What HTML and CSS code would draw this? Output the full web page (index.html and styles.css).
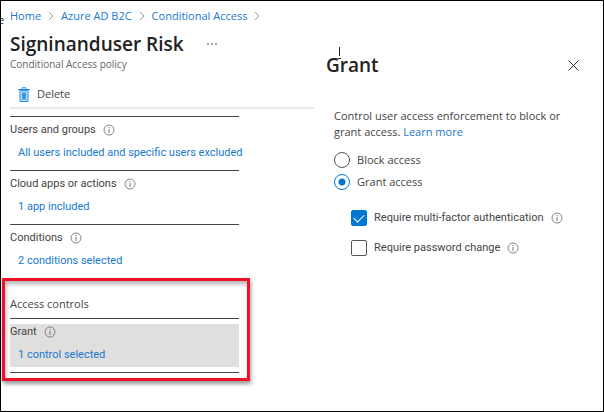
FILE: index.html
```
<!DOCTYPE html>
<html lang="en">
<head>
    <meta charset="UTF-8">
    <meta name="viewport" content="width=device-width, initial-scale=1.0">
    <title>Signinanduser Risk - Conditional Access</title>
    <link rel="stylesheet" href="styles.css">
</head>
<body>
    <svg width="0" height="0" class="sprite">
        <symbol id="info" viewBox="0 0 12 12">
            <circle cx="6" cy="6" r="5" fill="none" stroke="#777" stroke-width="0.9"/>
            <path d="M6 5v4M6 3v1.1" stroke="#777" fill="none"/>
        </symbol>
        <symbol id="chevron" viewBox="0 0 6 10">
            <path d="M1 1l4 4-4 4" stroke="#999" fill="none"/>
        </symbol>
    </svg>
    <span class="behind">e</span>

    <main class="window">
        <section class="policy">
            <nav class="breadcrumb">
                <a href="#">Home</a>
                <svg class="chevron"><use href="#chevron"/></svg>
                <a href="#">Azure AD B2C</a>
                <svg class="chevron"><use href="#chevron"/></svg>
                <a href="#">Conditional Access</a>
                <svg class="chevron"><use href="#chevron"/></svg>
            </nav>

            <div class="title-row">
                <h1>Signinanduser Risk</h1>
                <button class="more" aria-label="More">
                    <svg width="12" height="4" viewBox="0 0 12 4" fill="#333"><circle cx="2" cy="2" r="0.8"/><circle cx="6" cy="2" r="0.8"/><circle cx="10" cy="2" r="0.8"/></svg>
                </button>
            </div>
            <p class="subtitle">Conditional Access policy</p>

            <div class="toolbar">
                <button class="delete">
                    <svg width="12" height="15" viewBox="0 0 12 15">
                        <path d="M1.5 3h9v11a1 1 0 0 1-1 1h-7a1 1 0 0 1-1-1z" fill="#2f8fdf"/>
                        <path d="M2.5 4h7v10h-7z" fill="#b5daf7"/>
                        <path d="M4 5.5h4v7H4z" fill="#3c97e2"/>
                        <path d="M0 2.5h12M4 2V0.8h4V2" stroke="#2f8fdf" fill="none"/>
                    </svg>
                    Delete
                </button>
            </div>

            <div class="settings">
                <div class="item">
                    <div class="item-label">Users and groups <svg class="info"><use href="#info"/></svg></div>
                    <a href="#">All users included and specific users excluded</a>
                </div>
                <div class="item">
                    <div class="item-label">Cloud apps or actions <svg class="info"><use href="#info"/></svg></div>
                    <a href="#">1 app included</a>
                </div>
                <div class="item">
                    <div class="item-label">Conditions <svg class="info"><use href="#info"/></svg></div>
                    <a href="#">2 conditions selected</a>
                </div>
            </div>

            <div class="highlight">
                <h3>Access controls</h3>
                <div class="selected-wrap">
                    <div class="selected">
                        <div class="item-label">Grant <svg class="info"><use href="#info"/></svg></div>
                        <a href="#">1 control selected</a>
                    </div>
                </div>
            </div>
        </section>

        <section class="grant">
            <div class="grant-header">
                <h2>Grant<svg class="caret" width="5" height="12" viewBox="0 0 5 12"><path d="M2.5 0v9M1 11.5h3" stroke="#222" fill="none"/></svg></h2>
                <button class="close" aria-label="Close">
                    <svg width="11" height="11" viewBox="0 0 11 11"><path d="M0.5 0.5l10 10M10.5 0.5l-10 10" stroke="#333" fill="none"/></svg>
                </button>
            </div>

            <div class="grant-body">
                <p>Control user access enforcement to block or grant access. <a href="#">Learn more</a></p>

                <label class="radio"><input type="radio" name="access"> Block access</label>
                <label class="radio"><input type="radio" name="access" checked> Grant access</label>

                <div class="checks">
                    <label><input type="checkbox" checked> Require multi-factor authentication <svg class="info"><use href="#info"/></svg></label>
                    <label><input type="checkbox"> Require password change <svg class="info"><use href="#info"/></svg></label>
                </div>
            </div>
        </section>
    </main>
</body>
</html>
```
FILE: styles.css
```
* {
    box-sizing: border-box;
}

body {
    margin: 0;
    font-family: "Open Sans", "Noto Sans", sans-serif;
    font-size: 11px;
    line-height: 16px;
    color: #444;
    background: white;
}

h1, h2, h3, p {
    margin: 0;
}

a {
    color: #1679d3;
    text-decoration: none;
}

button {
    display: flex;
    align-items: center;
    padding: 0;
    border: none;
    background: none;
    font: inherit;
    color: inherit;
    cursor: pointer;
}

.sprite {
    position: absolute;
}

.behind {
    position: absolute;
    top: 12px;
    left: -2px;
    color: #222;
}

.window {
    display: grid;
    grid-template-columns: 52fr 48fr;
    min-height: 100vh;
    border: 1px solid #000;
}

.info {
    flex: none;
    width: 12px;
    height: 12px;
}

/* left pane */
.policy {
    padding: 7px 0 0 9px;
}

.breadcrumb {
    display: flex;
    align-items: center;
    gap: 7px;
    white-space: nowrap;
}

.chevron {
    width: 6px;
    height: 10px;
}

.title-row {
    display: flex;
    align-items: center;
    gap: 22px;
    margin-top: 8px;
}

h1, h2 {
    font-size: 19px;
    line-height: 24px;
    font-weight: 600;
    color: #222;
    white-space: nowrap;
}

.subtitle {
    font-size: 10px;
    color: #666;
}

.toolbar {
    padding: 14px 8px 5px;
    border-bottom: 2px solid #eaeaea;
}

.delete {
    gap: 7px;
}

.settings, .selected-wrap {
    width: 229px;
}

.settings {
    margin-top: 7px;
}

.item, .selected, .checks {
    font-family: Roboto, "Open Sans", sans-serif;
}

.item {
    padding: 5px 0 9px;
    border-top: 1px solid #444;
    white-space: nowrap;
}

.item-label {
    display: flex;
    align-items: center;
    gap: 7px;
    margin-bottom: 7px;
}

.item a, .selected a {
    display: block;
    padding-left: 8px;
}

.highlight {
    width: 248px;
    margin-left: -8px;
    padding: 15px 5px 5px;
    border: 3px solid #ee1128;
    box-shadow: 1px 3px 4px rgba(0,0,0,0.4), inset 1px 3px 4px rgba(0,0,0,0.3);
}

h3 {
    font-size: 11px;
    font-weight: 400;
    margin-bottom: 6px;
}

.selected-wrap {
    padding: 5px 0;
    border: solid #444;
    border-width: 1px 0;
}

.selected {
    padding-bottom: 4px;
    background: #e1dfdd;
}

/* right pane */
.grant {
    padding: 52px 24px 0 12px;
}

.grant-header {
    display: flex;
    align-items: center;
    justify-content: space-between;
}

h2 {
    position: relative;
}

.caret {
    position: absolute;
    top: -6px;
    left: 11px;
}

.grant-body {
    padding: 31px 0 0 8px;
}

.radio {
    display: flex;
    align-items: center;
    gap: 7px;
    margin-bottom: 6px;
}

.grant-body p {
    margin-bottom: 12px;
}

input {
    appearance: none;
    flex: none;
    width: 16px;
    height: 16px;
    margin: 0;
    border: 1px solid #555;
    background: white;
}

input[type="radio"] {
    border-radius: 50%;
}

input[type="radio"]:checked {
    border-color: #0078d4;
    background: radial-gradient(circle, #0078d4 3px, white 4px);
}

input[type="checkbox"] {
    display: flex;
    align-items: center;
    justify-content: center;
    border-radius: 2px;
}

input[type="checkbox"]:checked {
    border-color: #0078d4;
    background: #0078d4;
}

input[type="checkbox"]:checked::before {
    content: "";
    width: 9px;
    height: 5px;
    margin-top: -3px;
    border: solid white;
    border-width: 0 0 1px 1px;
    transform: rotate(-45deg);
}

.checks {
    display: flex;
    flex-direction: column;
    gap: 14px;
    padding: 14px 0 0 17px;
}

.checks label {
    display: flex;
    align-items: center;
    gap: 7px;
    white-space: nowrap;
}
```
